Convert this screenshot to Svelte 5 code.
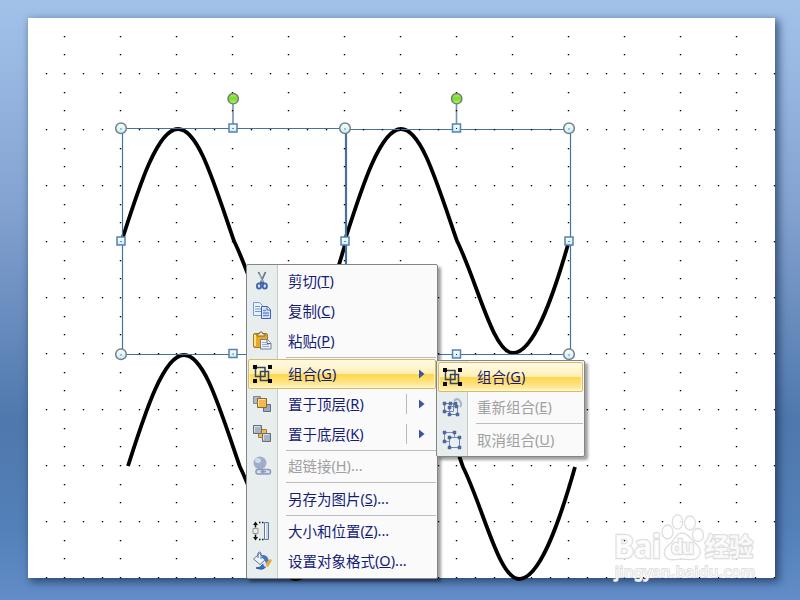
<script lang="ts">
  interface Item {
    icon?: string;
    label?: string;
    key?: string;
    more?: boolean;
    active?: boolean;
    disabled?: boolean;
    arrow?: boolean;
    split?: boolean;
    sep?: boolean;
  }

  const mainItems: Item[] = [
    { icon: 'cut', label: '剪切', key: 'T' },
    { icon: 'copy', label: '复制', key: 'C' },
    { icon: 'paste', label: '粘贴', key: 'P' },
    { sep: true },
    { icon: 'group', label: '组合', key: 'G', active: true, arrow: true },
    { icon: 'front', label: '置于顶层', key: 'R', arrow: true, split: true },
    { icon: 'back', label: '置于底层', key: 'K', arrow: true, split: true },
    { sep: true },
    { icon: 'link', label: '超链接', key: 'H', more: true, disabled: true },
    { sep: true },
    { label: '另存为图片', key: 'S', more: true },
    { sep: true },
    { icon: 'size', label: '大小和位置', key: 'Z', more: true },
    { icon: 'format', label: '设置对象格式', key: 'O', more: true },
  ];
  const subItems: Item[] = [
    { icon: 'group', label: '组合', key: 'G', active: true },
    { icon: 'regroup', label: '重新组合', key: 'E', disabled: true },
    { sep: true },
    { icon: 'ungroup', label: '取消组合', key: 'U', disabled: true },
  ];

  // grid dots: every third row and column is filled in
  const dots: { x: number; y: number }[] = [];
  for (let i = 0; i < 40; i++) {
    for (let j = 0; j < 30; j++) {
      if (i % 3 === 1 || j % 3 === 2) {
        dots.push({ x: Math.round(45.6 + i * 18.667), y: Math.round(35.8 + j * 18.667) });
      }
    }
  }

  const wave = 'c16-50 35-111 56-111 c20 0 35 51 56 112 c20 40 36 112 56 112 c20 0 39-52 56-112';
  const waves = [[122, 240], [345, 240], [128, 466], [351, 466]];
  const circles = [[121, 128], [345, 128], [569, 128], [121, 354], [569, 354]];
  const squares = [[233, 128], [456.5, 128], [121, 241], [345, 241], [569, 241], [233, 353.5], [456.5, 354]];
</script>

{#snippet icon(name: string | undefined)}
  <svg class="icon" width="20" height="20" viewBox="0 0 20 20">
    {#if name === 'cut'}
      <path d="M6.500 1 L12 13 M13.500 1 L8 13" stroke="#6b7785" stroke-width="1.800" />
      <path d="M7 3 L11 12" stroke="#dfe6ec" stroke-width=".7" />
      <ellipse cx="7" cy="15" rx="2.100" ry="2.600" fill="#dce6f8" stroke="#3f62b0" stroke-width="1.800" />
      <ellipse cx="12.800" cy="15" rx="2.100" ry="2.600" fill="#dce6f8" stroke="#3f62b0" stroke-width="1.800" />
      <path d="M8 12h4" stroke="#3f62b0" stroke-width="2" />
    {:else if name === 'copy'}
      <path d="M1.500 1.500h6l3 3v10h-9z" fill="#eaf2fd" stroke="#7b9bd0" />
      <path d="M3 5.500h5M3 8h6M3 10.500h6" stroke="#6e96d8" />
      <path d="M9.500 5.500h6l3 3v9h-9z" fill="#dce9fb" stroke="#3f61b0" />
      <path d="M15 5.500v3.500h3.500" fill="#fff" stroke="#3f61b0" />
      <path d="M11 9.500h3M11 12h6M11 14.500h6" stroke="#668ed5" stroke-width="1.300" />
    {:else if name === 'paste'}
      <rect x="1.500" y="2.500" width="14" height="14" rx="1.500" fill="#eaa823" stroke="#a8781c" />
      <path d="M3 4v11" stroke="#ffe28b" stroke-width="2" />
      <path d="M5 5V3h2l1-2h2l1 2h2v2z" fill="#f4e8c8" stroke="#8c682c" />
      <path d="M8.500 8.500h7l3.500 4v5.500h-10.500z" fill="#eef3fb" stroke="#6f7c98" />
      <path d="M10 11.500h4M10 13.500h7M10 15.500h7" stroke="#9daccd" />
      <path d="M15 9v3.500h3.500" fill="#fff" stroke="#59667e" />
    {:else if name === 'group'}
      <path d="M5 3.500h8v9H3.500V5M8.500 7.500h8v9h-8z" fill="none" stroke="#32445f" stroke-width="1.500" />
      <path d="M1 1h4v4H1zM16 1h4v4h-4zM1 15h4v4H1zM16 15h4v4h-4z" fill="#080808" />
    {:else if name === 'front'}
      <path d="M1.500 2.500h7v7h-7z" fill="#aeb7c4" stroke="#7d8798" />
      <path d="M11.500 10.500h7v7h-7z" fill="#9faaba" stroke="#626d80" />
      <path d="M5.500 4.500h9v9h-9z" fill="#f5b84d" stroke="#8b6a31" />
      <path d="M6.500 12V5.500H13" fill="none" stroke="#ffe2a0" />
    {:else if name === 'back'}
      <path d="M6.500 5.500h8v8h-8z" fill="#f7b947" stroke="#a77b30" />
      <path d="M1.500 1.500h8v8h-8zM10.500 9.500h8v8h-8z" fill="#a9b3c1" stroke="#626d7e" />
      <path d="M2.500 8V2.500H8M11.500 16v-5.500H17" fill="none" stroke="#dbe1e9" />
    {:else if name === 'link'}
      <circle cx="8" cy="7" r="6.500" fill="#9fadcb" />
      <ellipse cx="6" cy="4.500" rx="3" ry="2.500" fill="#d3dbea" />
      <rect x="4" y="13.500" width="8" height="4.500" rx="2" fill="#d8dfeb" stroke="#8b9abb" stroke-width="1.500" />
      <rect x="10.500" y="13.500" width="8" height="4.500" rx="2" fill="#d8dfeb" stroke="#8b9abb" stroke-width="1.500" />
      <path d="M8.500 15.700h5.500" stroke="#8b9abb" stroke-width="1.500" />
    {:else if name === 'size'}
      <path d="M3.500 .5L6 4H1zM3.500 19.500L6 16H1z" fill="#111" />
      <path d="M3.500 3.500v3M3.500 13.500v3" stroke="#111" stroke-width="1.500" />
      <path d="M1 7.500h5v5H1z" fill="#e9e9e9" stroke="#999" />
      <path d="M7 1.500h5M7 18.500h5" stroke="#111" stroke-width="1.500" stroke-dasharray="1.500 1.500" />
      <path d="M12.500 1.500h4v17h-4z" fill="#c7d7ea" stroke="#667b9c" />
      <path d="M13.500 2.500v15" stroke="#fff" />
    {:else if name === 'format'}
      <path d="M7.500 2.500L14 8l-6 5.500L1.500 8z" fill="#edf2fa" stroke="#60789d" />
      <path d="M6 7V2q1.500-2 3 0v6" fill="none" stroke="#536c92" />
      <path d="M10 4q6-1 7 7l-3 2q-1-5-4-6z" fill="#4775bd" />
      <path d="M4 17q5 0 7-4l3 2q-2 5-10 2z" fill="#3970c7" stroke="#2b56a0" />
      <path d="M12 14l6-6 2 1-4 7z" fill="#e6aa36" />
      <path d="M11 13l2-1 2 3-2 1z" fill="#dfe8f5" />
    {:else if name === 'regroup'}
      <path d="M2.500 6.500h9v8h-9zM7.500 9.500h8v8h-8z" fill="none" stroke="#7084b0" />
      <path d="M1 5h3v3H1zM7 5h3v3H7zM1 13h3v3H1zM6 9h3v3H6zM13 8h3v3h-3zM6 16h3v3H6zM14 16h3v3h-3zM12 5h3v3h-3z" fill="#52689f" stroke="#52689f" stroke-width=".5" />
      <path d="M12 4q3-4 6 0 2 3 0 6" fill="none" stroke="#a5b3cd" stroke-width="2" />
    {:else if name === 'ungroup'}
      <path d="M2.500 2.500h10v9h-10z" fill="none" stroke="#7d8fb6" />
      <path d="M7.500 7.500h10v10h-10z" fill="#e9eeee" stroke="#7285ae" />
      <path d="M1 1h3v3H1zM11 1h3v3h-3zM1 10h3v3H1zM6 6h3v3H6zM16 6h3v3h-3zM6 16h3v3H6zM16 16h3v3h-3z" fill="#4f669d" stroke="#4f669d" stroke-width=".5" />
    {/if}
  </svg>
{/snippet}

{#snippet menu(items: Item[])}
  {#each items as item}
    {#if item.sep}
      <div class="sep"></div>
    {:else}
      <div class="item" class:active={item.active} class:disabled={item.disabled} role="menuitem" tabindex="-1">
        <span class="gutter">{@render icon(item.icon)}</span>
        <span class="label">{item.label}<span class="key">(<u>{item.key}</u>){item.more ? '...' : ''}</span></span>
        {#if item.arrow}
          <span class="arrow" class:split={item.split}>
            <svg width="6" height="10" viewBox="0 0 6 10"><path d="M0 .5L5.500 5 0 9.500z" fill="#3c55a0" /></svg>
          </span>
        {/if}
      </div>
    {/if}
  {/each}
{/snippet}

<div class="desk">
  <svg class="slide" width="747" height="560" viewBox="28 18 747 560">
    <defs>
      <linearGradient id="green" x2="0" y2="1">
        <stop offset="0" stop-color="#a6f05c" />
        <stop offset=".5" stop-color="#78dd28" />
        <stop offset="1" stop-color="#b0f565" />
      </linearGradient>
      <linearGradient id="pale" x2="0" y2="1">
        <stop offset="0" stop-color="#fff" />
        <stop offset="1" stop-color="#c4edf5" />
      </linearGradient>
    </defs>

    {#each waves as [x, y]}
      <path class="wave" d="M{x} {y}{wave}" />
    {/each}
    <g class="frame">
      <path d="M122.500 128.500H345.500V354.500H122.500z" />
      <path d="M346.500 129.500H570.500V354.500H346.500z" />
      <path d="M233 99V128M456.500 99V128" class="stem" />
    </g>
    {#each dots as d}
      <rect x={d.x - 0.2} y={d.y} width="1.400" height="1.300" fill="#000" />
    {/each}
    {#each circles as [x, y]}
      <circle cx={x} cy={y + 0.3} r="5.300" fill="url(#pale)" stroke="#73818c" stroke-width="1.500" />
      <rect x={x - 0.5} y={y + 0.5} width="1" height="1" fill="#222" />
    {/each}
    {#each squares as [x, y]}
      <rect x={x - 4} y={y - 4} width="8" height="8" fill="url(#pale)" stroke="#5781ae" stroke-width="1.500" />
      <rect x={x - 0.5} y={y} width="1" height="1" fill="#222" />
    {/each}
    <circle cx="233.200" cy="98.700" r="5.200" fill="url(#green)" stroke="#6f7779" stroke-width="1.400" />
    <circle cx="456.700" cy="98.700" r="5.200" fill="url(#green)" stroke="#6f7779" stroke-width="1.400" />

    <g class="mark">
      <ellipse cx="667.500" cy="532" rx="5.500" ry="7" />
      <ellipse cx="677.500" cy="522" rx="5.200" ry="7.200" />
      <ellipse cx="690" cy="523" rx="5.500" ry="7" />
      <ellipse cx="698" cy="535" rx="5.500" ry="6.500" />
      <path d="M682 533c6 0 8 5 13 10 5 4 7 8 4 13-4 6-12 3-17 3s-14 3-17-3c-2-6 1-9 6-13 4-4 5-10 11-10z" />
      <text x="614" y="558" class="brand" textLength="47" lengthAdjust="spacingAndGlyphs">Bai</text>
      <text x="671" y="554" class="du" textLength="23">du</text>
      <text x="705" y="556" class="cn" textLength="48" lengthAdjust="spacingAndGlyphs">经验</text>
      <text x="615" y="577" class="url" textLength="140">jingyan.baidu.com</text>
    </g>
  </svg>

  <div class="menu main" role="menu">{@render menu(mainItems)}</div>
  <div class="menu sub" role="menu">{@render menu(subItems)}</div>
</div>

<style>
  :global(body) { margin: 0; overflow: hidden; }
  .desk { position: relative; box-sizing: border-box; width: 800px; height: 600px; padding: 18px 25px 22px 28px; overflow: hidden; background: linear-gradient(#a3c2ea 0%, #84a3d1 34%, #4f78ad 70%, #5380b8 88%, #628dc8 100%); }
  .slide { display: block; overflow: visible; background: #fff; box-shadow: 3px 3px 8px 1px rgba(20, 40, 75, 0.65); }
  .wave { fill: none; stroke: #000; stroke-width: 3.8; stroke-linejoin: round; }
  .frame { fill: none; stroke: #44729f; stroke-width: 1.2; }
  .stem { stroke: #7590b5; stroke-width: 1.6; }

  .mark { fill: #fff; fill-opacity: 0.85; stroke: #dedede; stroke-width: 1.3; }
  .mark text { font-family: "Noto Sans", "Noto Sans CJK SC", sans-serif; font-weight: 700; paint-order: stroke; stroke-width: 2.4; }
  .brand { font-size: 32px; }
  .mark .du { font-size: 19px; }
  .cn { font-size: 25px; }
  .mark .url { font-size: 15px; font-weight: 400; stroke-width: 1.8; }

  .menu { position: absolute; box-sizing: border-box; padding: 1px; border: 1px solid #858585; border-radius: 2px; background: linear-gradient(90deg, #e8eded 30px, #c4cccc 30px, #c4cccc 31px, #fafafa 31px); box-shadow: 3px 3px 3px rgba(0, 0, 0, 0.38); }
  .main { left: 246px; top: 264px; width: 192px; height: 315px; }
  .sub { left: 436px; top: 360px; width: 149px; height: 97px; }
  .item { display: flex; align-items: center; box-sizing: border-box; height: 30px; color: #151c78; font: 14.5px/26px "Noto Sans", "Noto Sans CJK SC", sans-serif; border: 1px solid transparent; border-radius: 2px; }
  .active { border-color: #d9b967; background: linear-gradient(#fffbe9 0%, #ffefb5 48%, #ffd74c 52%, #ffe48b 82%, #fff5c4 100%); box-shadow: inset 0 0 0 1px rgba(255, 250, 210, 0.75); }
  .disabled { color: #a0a0a0; }
  .gutter { display: flex; flex: none; justify-content: center; width: 26px; }
  .icon { display: block; }
  .label { flex: 1; height: 28px; padding-left: 13px; white-space: nowrap; }
  .key { display: inline-block; height: 26px; line-height: 26px; vertical-align: 1px; }
  .label u { text-underline-offset: 1px; text-decoration-thickness: 1px; }
  .sub .label { padding-left: 12px; }
  .arrow { display: flex; align-items: center; justify-content: flex-end; box-sizing: border-box; width: 19px; height: 20px; margin-right: 10px; }
  .split { border-left: 1px solid #b9b9b9; }
  .sep { height: 2.6px; margin-left: 38px; background: linear-gradient(transparent 1px, #bdbdbd 1px, #bdbdbd 2px, transparent 2px); }
</style>
